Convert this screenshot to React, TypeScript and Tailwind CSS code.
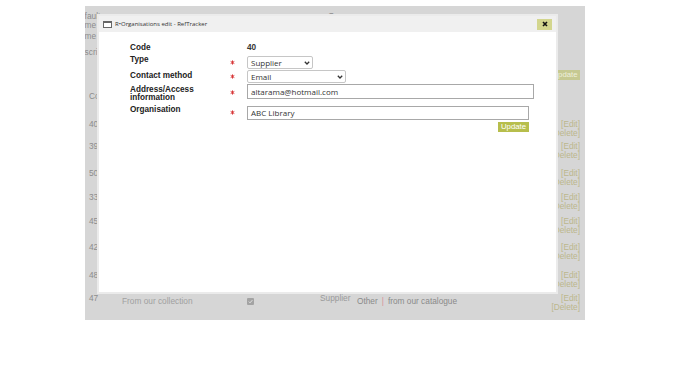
import React from 'react';

const rows = [
  { code: '40', h: 'h-[22px]' },
  { code: '39', h: 'h-[27px]' },
  { code: '50', h: 'h-[24px]' },
  { code: '33', h: 'h-[24px]' },
  { code: '45', h: 'h-[26px]' },
  { code: '42', h: 'h-[28px]' },
  { code: '48', h: 'h-[23px]' },
];

function Chevron() {
  return (
    <svg width="6" height="4" viewBox="0 0 6 4" className="shrink-0">
      <path d="M0.8 0.8 L3 3 L5.2 0.8" fill="none" stroke="#333" strokeWidth="1.3" />
    </svg>
  );
}

function Star() {
  return (
    <div className="flex w-[20px] self-center pl-[3px]">
      <svg width="5" height="5" viewBox="0 0 6 6">
        <g stroke="#d8393a" strokeWidth="1.2">
          <line x1="3" y1="0.5" x2="3" y2="5.5" />
          <line x1="0.8" y1="1.7" x2="5.2" y2="4.3" />
          <line x1="0.8" y1="4.3" x2="5.2" y2="1.7" />
        </g>
      </svg>
    </div>
  );
}

function Select({ width, value }: { width: string; value: string }) {
  return (
    <div
      className={`flex h-[13px] ${width} items-center justify-between rounded-[2px] border border-[#c6c6c6] bg-white pl-[3px] pr-[2px] font-['Open_Sans',sans-serif] text-[8px] text-[#333]`}
    >
      <span className="leading-none">{value}</span>
      <Chevron />
    </div>
  );
}

function EditLinks() {
  return (
    <div className="ml-auto flex flex-col items-end leading-[9px] text-[#bcb78c]">
      <span>[Edit]</span>
      <span>[Delete]</span>
    </div>
  );
}

export default function App() {
  return (
    <div className="h-[370px] w-[684px] bg-white pl-[85px] pt-[6px]">
      <div className="relative h-[314px] w-[500px] overflow-hidden bg-[#d6d6d6] font-['Liberation_Sans',Arial,sans-serif] text-[8.3px] text-[#8c8c8c]">
        {/* page under the dialog */}
        <div className="flex flex-col whitespace-nowrap">
          <div className="h-[5px]" />
          <div className="flex h-[10px] leading-[10px]">
            <span className="-ml-[11px] w-[120px]">Default</span>
            <span className="ml-[134px]">Group</span>
          </div>
          <div className="-ml-[11px] h-[8px] leading-[8px]">Name</div>
          <div className="-ml-[11px] h-[14px] leading-[14px]">Name</div>
          <div className="-ml-[11px] h-[18px] leading-[18px]">Description</div>
          <div className="h-[9px]" />
          <div className="flex h-[10px] justify-end pr-[5px]">
            <div className="flex w-[30px] items-center justify-center bg-[#c6c992] text-[7.8px] text-[#eef0dc]">
              Update
            </div>
          </div>
          <div className="h-[11px]" />
          <div className="h-[28px] pl-[4px] leading-[10px]">Code</div>

          {rows.map((r) => (
            <div key={r.code} className={`flex ${r.h} pl-[4px] pr-[5px] pt-[1px]`}>
              <span className="leading-[9px]">{r.code}</span>
              <EditLinks />
            </div>
          ))}

          <div className="flex h-[27px] pl-[4px] pr-[5px] pt-[1px]">
            <span className="w-[33px] leading-[9px]">47</span>
            <span className="mt-[3px] w-[125px] leading-[9px] text-[#a0a0a0]">From our collection</span>
            <span className="mt-[4px] w-[73px]">
              <span className="flex h-[7px] w-[7px] items-center justify-center rounded-[1px] bg-[#a3a3a3]">
                <svg width="5" height="5" viewBox="0 0 5 5">
                  <path d="M0.8 2.6 L2 3.8 L4.3 1.2" fill="none" stroke="#e4e4e4" strokeWidth="1" />
                </svg>
              </span>
            </span>
            <span className="w-[37px] leading-[9px] text-[#9a9a9a]">Supplier</span>
            <span className="mt-[3px] leading-[9px] text-[#8a8a8a]">
              Other<span className="mx-[4px] text-[#d88c9c]">|</span>from our catalogue
            </span>
            <EditLinks />
          </div>
        </div>

        {/* dialog */}
        <div className="absolute left-[12px] top-[8px] flex h-[280px] w-[461px] flex-col border-2 border-[#ebebeb] bg-white">
          <div className="flex h-[16px] items-center bg-[#f0f0f0] pl-[4px] pr-[4px]">
            <svg width="9" height="7" viewBox="0 0 9 7">
              <rect x="0.5" y="0.5" width="8" height="6" fill="#fff" stroke="#666" strokeWidth="1" />
              <line x1="0.5" y1="1.5" x2="8.5" y2="1.5" stroke="#666" strokeWidth="1" />
            </svg>
            <span className="ml-[3px] font-['Open_Sans',sans-serif] text-[6px] text-[#333]">
              R•Organisations edit - RefTracker
            </span>
            <div className="ml-auto flex h-[11px] w-[15px] items-center justify-center bg-[#d3d68e]">
              <svg width="6" height="6" viewBox="0 0 6 6">
                <path d="M1 1 L5 5 M5 1 L1 5" stroke="#111" strokeWidth="1.6" />
              </svg>
            </div>
          </div>

          <div className="pl-[31px] pt-[11px] text-[8.2px] text-[#222]">
            <div className="flex h-[11px]">
              <div className="w-[117px] font-bold leading-[9px]">Code</div>
              <div className="font-bold leading-[9px] text-[#333]">40</div>
            </div>
            <div className="mt-[1px] flex h-[14px]">
              <div className="w-[97px] font-bold leading-[9px]">Type</div>
              <Star />
              <div className="mt-[1px]">
                <Select width="w-[66px]" value="Supplier" />
              </div>
            </div>
            <div className="mt-[1px] flex h-[13px]">
              <div className="w-[97px] pt-[1px] font-bold leading-[9px]">Contact method</div>
              <Star />
              <Select width="w-[99px]" value="Email" />
            </div>
            <div className="mt-[1px] flex h-[17px]">
              <div className="w-[97px] pt-[2px] font-bold leading-[8px]">
                Address/Access
                <br />
                information
              </div>
              <Star />
              <div className="flex h-[15px] w-[287px] items-center border border-[#a8a8a8] pl-[3px] font-['Open_Sans',sans-serif] text-[8px] text-[#333]">
                altarama@hotmail.com
              </div>
            </div>
            <div className="mt-[4px] flex h-[15px]">
              <div className="w-[97px] font-bold leading-[9px]">Organisation</div>
              <Star />
              <div className="mt-[1px] flex h-[14px] w-[282px] items-center border border-[#a8a8a8] pl-[3px] font-['Open_Sans',sans-serif] text-[8px] text-[#333]">
                ABC Library
              </div>
            </div>
          </div>
          <div className="mt-[2px] flex justify-end pr-[27px]">
            <div className="flex h-[10px] w-[31px] items-center justify-center bg-[#b7be4c] font-['Liberation_Sans',Arial,sans-serif] text-[7.8px] text-white">
              Update
            </div>
          </div>
        </div>
      </div>
    </div>
  );
}
